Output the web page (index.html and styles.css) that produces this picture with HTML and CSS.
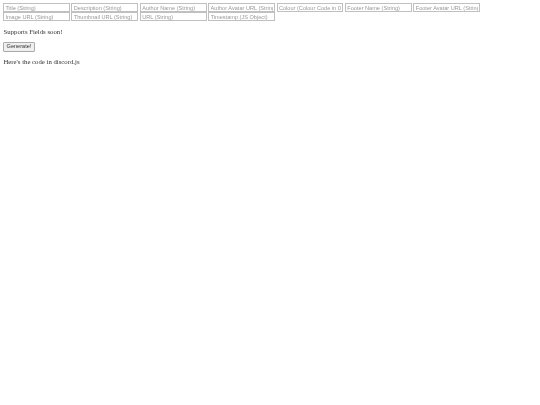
FILE: index.html
```html
<!DOCTYPE html>
<html lang="en">

<head>
  <meta charset="UTF-8">
  <title>Embed Generator</title>
  <link rel="stylesheet" href="styles.css">
</head>

<body>
  <div class="fields">
    <input class="field" type="text" placeholder="Title (String)">
    <input class="field" type="text" placeholder="Description (String)">
    <input class="field" type="text" placeholder="Author Name (String)">
    <input class="field" type="text" placeholder="Author Avatar URL (String)">
    <input class="field" type="text" placeholder="Colour (Colour Code in 0x Format)">
    <input class="field" type="text" placeholder="Footer Name (String)">
    <input class="field" type="text" placeholder="Footer Avatar URL (String)">
    <input class="field" type="text" placeholder="Image URL (String)">
    <input class="field" type="text" placeholder="Thumbnail URL (String)">
    <input class="field" type="text" placeholder="URL (String)">
    <input class="field" type="text" placeholder="Timestamp (JS Object)">
  </div>
  <p class="note">Supports Fields soon!</p>
  <button class="generate" type="button">Generate!</button>
  <p class="note">Here's the code in discord.js</p>
</body>

</html>
```

FILE: styles.css
```css
body {
  margin: 3px;
  background: #fff;
  color: #333;
  font-family: "Liberation Serif", serif;
  font-size: 6.75px;
  line-height: 8px;
  filter: blur(0.25px);
}

.fields {
  display: flex;
  flex-wrap: wrap;
  gap: 0 1.6px;
  width: 480px;
}

.field {
  box-sizing: border-box;
  width: 66.8px;
  height: 9.2px;
  margin: 0;
  padding: 0 1.4px;
  border: 1px solid #c0c0c0;
  border-radius: 0;
  font-family: "Liberation Sans", sans-serif;
  font-size: 5.6px;
}

.field::placeholder {
  color: #999;
}

.note {
  margin: 6.4px 0;
  padding-left: 0.5px;
}

.generate {
  display: block;
  box-sizing: border-box;
  width: 32px;
  height: 9.4px;
  margin: 0;
  padding: 0;
  border: 1px solid #aaa;
  border-radius: 1px;
  background: #efefef;
  color: #333;
  font-family: "Liberation Sans", sans-serif;
  font-size: 5.6px;
  line-height: 7px;
}
```
